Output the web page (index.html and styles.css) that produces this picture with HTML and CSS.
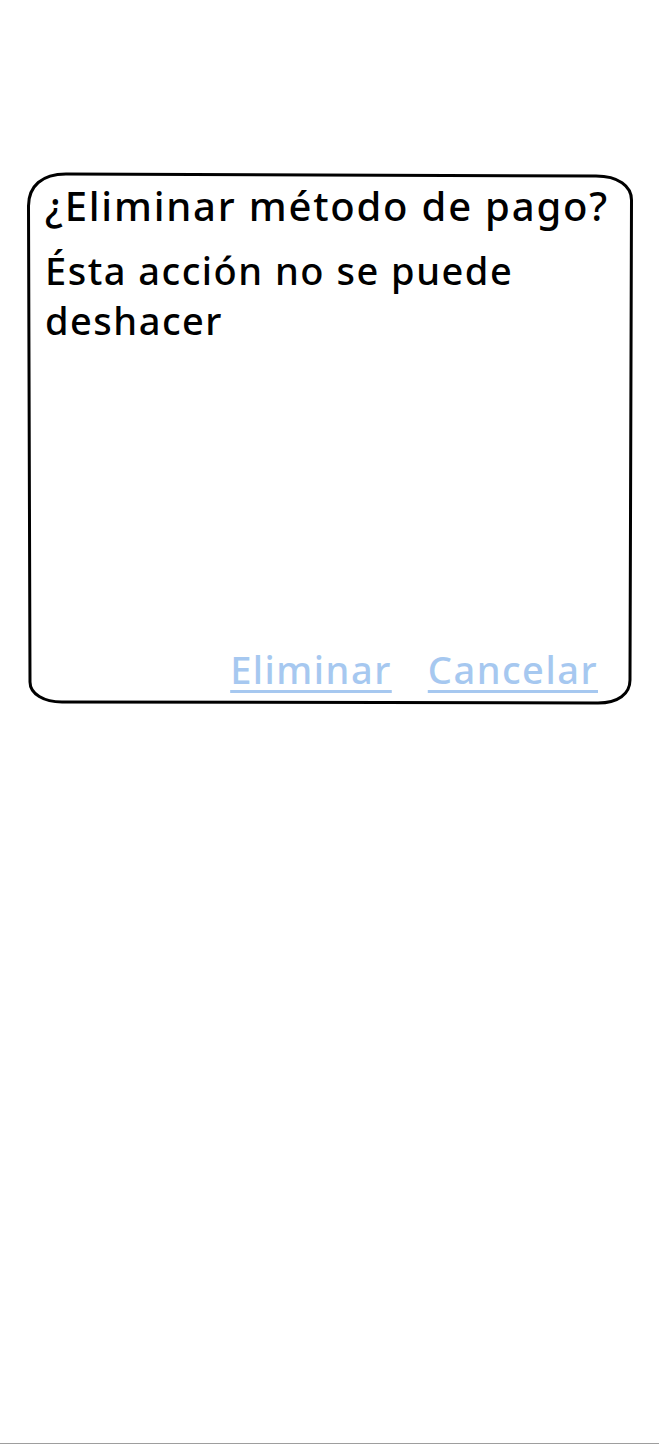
FILE: index.html
```html
<!DOCTYPE html>
<html lang="es">
<head>
<meta charset="utf-8">
<title>Eliminar método de pago</title>
<link rel="stylesheet" href="styles.css">
</head>
<body>
<div class="screen">
  <div class="dialog">
    <svg class="dialog-frame" viewBox="0 0 608 534" aria-hidden="true">
      <path d="M2.5,34 C2.5,14 16,2 40,2 L570,4 C592,4 605.5,14 605.5,28 L604,508 C604,522 592,531 572,531 L36,530 C18,530 4,522 4,510 Z" />
    </svg>
    <h1 class="dialog-title">¿Eliminar método de pago?</h1>
    <p class="dialog-text">Ésta acción no se puede deshacer</p>
    <div class="dialog-actions">
      <a class="dialog-btn" href="#">Eliminar</a>
      <a class="dialog-btn" href="#">Cancelar</a>
    </div>
  </div>
</div>
</body>
</html>
```
FILE: styles.css
```css
html, body {
  margin: 0;
  padding: 0;
  background: #ffffff;
}

.screen {
  height: 1444px;
  box-sizing: border-box;
  border-bottom: 1px solid #9e9e9e;
  padding-top: 172px;
  font-family: "Noto Sans", "DejaVu Sans", sans-serif;
  color: #000000;
}

.dialog {
  position: relative;
  margin-left: 26px;
  width: 608px;
  height: 534px;
  box-sizing: border-box;
  padding: 9px 20px 14px 19px;
  display: flex;
  flex-direction: column;
}

.dialog-frame {
  position: absolute;
  left: 0;
  top: 0;
  width: 608px;
  height: 534px;
  overflow: visible;
}

.dialog-frame path {
  fill: none;
  stroke: #000000;
  stroke-width: 3;
  stroke-linejoin: round;
}

.dialog-title {
  position: relative;
  margin: 0;
  font-size: 40px;
  font-weight: 500;
  line-height: 50px;
  letter-spacing: 1.8px;
  white-space: nowrap;
}

.dialog-text {
  position: relative;
  margin: 14px 0 0 0;
  font-size: 38px;
  font-weight: 500;
  line-height: 50px;
  letter-spacing: 1.5px;
  width: 530px;
}

.dialog-actions {
  position: relative;
  margin-top: auto;
  display: flex;
  justify-content: flex-end;
  gap: 36px;
  padding-right: 16px;
}

.dialog-btn {
  font-size: 38px;
  font-weight: 500;
  line-height: 46px;
  letter-spacing: 1.5px;
  color: #a6c8f0;
  text-decoration: underline;
  text-decoration-thickness: 2.5px;
  text-underline-offset: 6px;
}
```
